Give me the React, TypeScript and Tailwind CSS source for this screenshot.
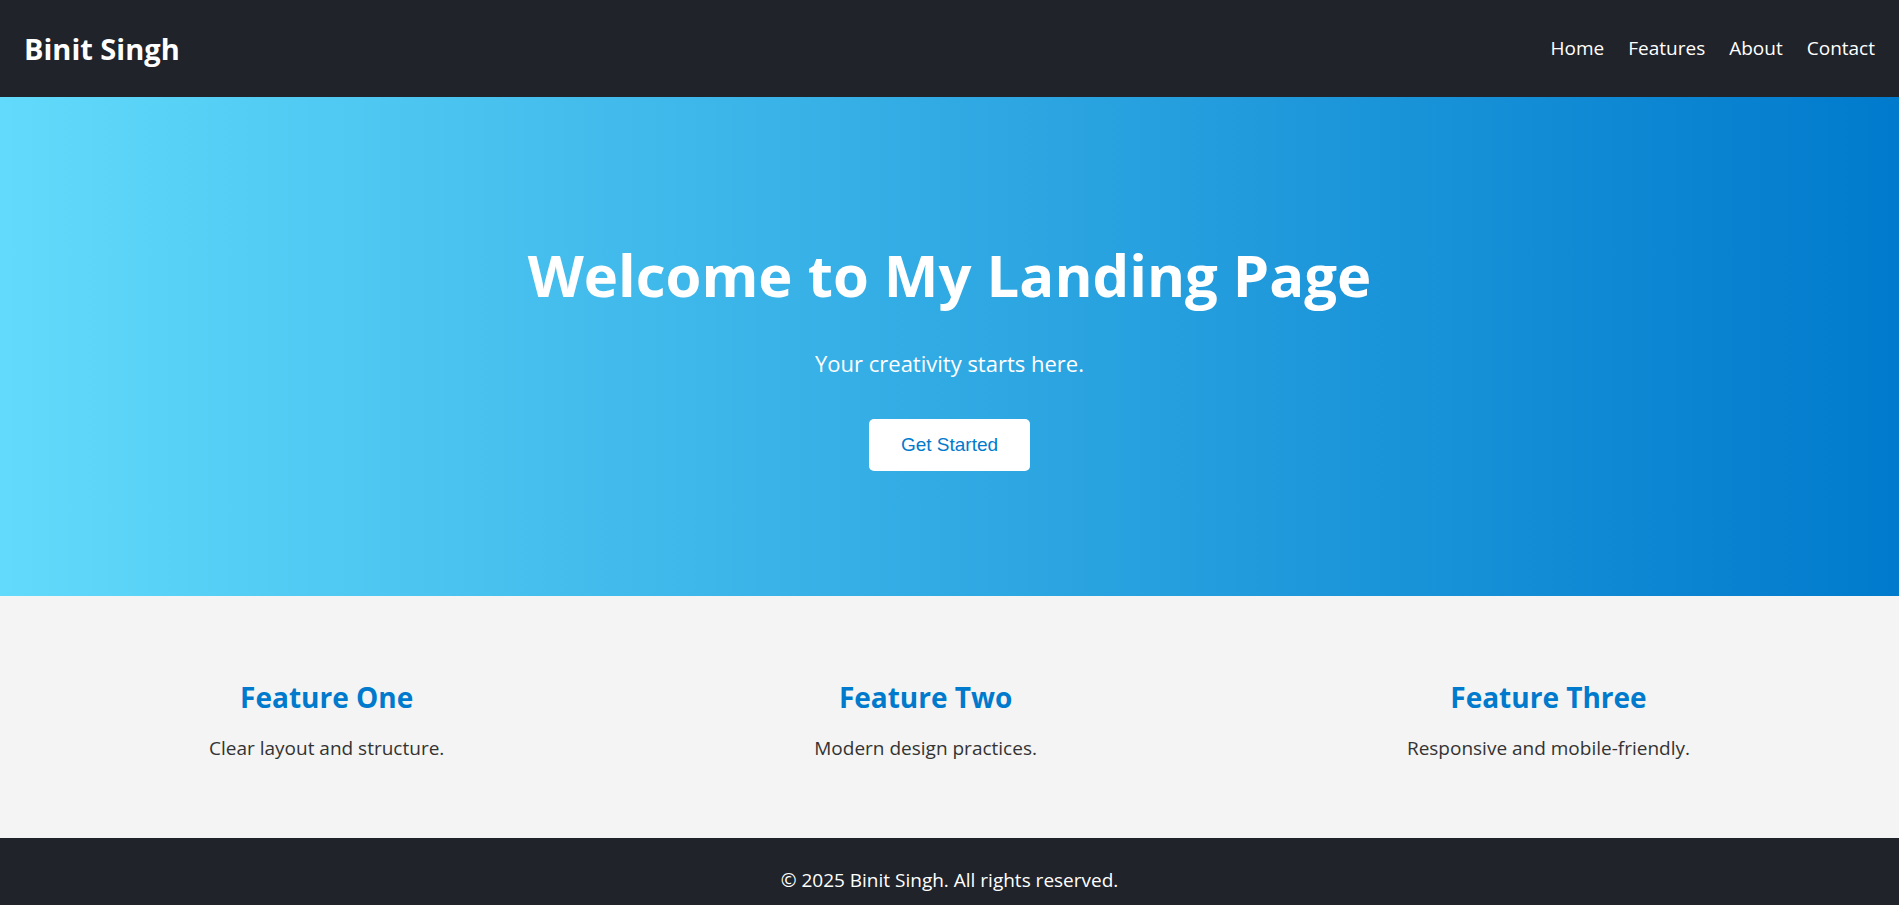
import React from 'react'

const navLinks = ['Home', 'Features', 'About', 'Contact']

const features = [
  { title: 'Feature One', text: 'Clear layout and structure.' },
  { title: 'Feature Two', text: 'Modern design practices.' },
  { title: 'Feature Three', text: 'Responsive and mobile-friendly.' },
]

function Header() {
  return (
    <header className="flex h-[97px] items-center justify-between bg-[#20232a] px-6 text-white">
      <h1 className="text-[29px] font-bold leading-none">Binit Singh</h1>
      <nav className="flex gap-6 text-[19px]">
        {navLinks.map((link) => (
          <a key={link} href="#" className="text-white">
            {link}
          </a>
        ))}
      </nav>
    </header>
  )
}

function Hero() {
  return (
    <section className="flex h-[499px] flex-col items-center bg-[linear-gradient(to_right,#61dafb,#007acc)] pt-[139px] text-center text-white">
      <h2 className="text-[58px] font-bold leading-[77px]">
        Welcome to My Landing Page
      </h2>
      <p className="mt-[34px] text-[22px] leading-[32px]">
        Your creativity starts here.
      </p>
      <button
        type="button"
        className="mt-[40px] h-[52px] rounded-[5px] bg-white px-8 font-['Liberation_Sans',Arial,sans-serif] text-[19px] text-[#007acc]"
      >
        Get Started
      </button>
    </section>
  )
}

function Features() {
  return (
    <section className="flex h-[242px] justify-around bg-[#f4f4f4] px-6 pt-[81px] text-center">
      {features.map((f) => (
        <div key={f.title}>
          <h3 className="text-[28px] font-bold leading-[40px] text-[#007acc]">
            {f.title}
          </h3>
          <p className="mt-[17px] text-[19px] leading-[28px] text-[#333]">
            {f.text}
          </p>
        </div>
      ))}
    </section>
  )
}

export default function App() {
  return (
    <div className="min-h-screen font-['Open_Sans','Noto_Sans',sans-serif]">
      <Header />
      <Hero />
      <Features />
      <footer className="bg-[#20232a] py-[28px] text-center text-[19px] leading-[28px] text-white">
        © 2025 Binit Singh. All rights reserved.
      </footer>
    </div>
  )
}
